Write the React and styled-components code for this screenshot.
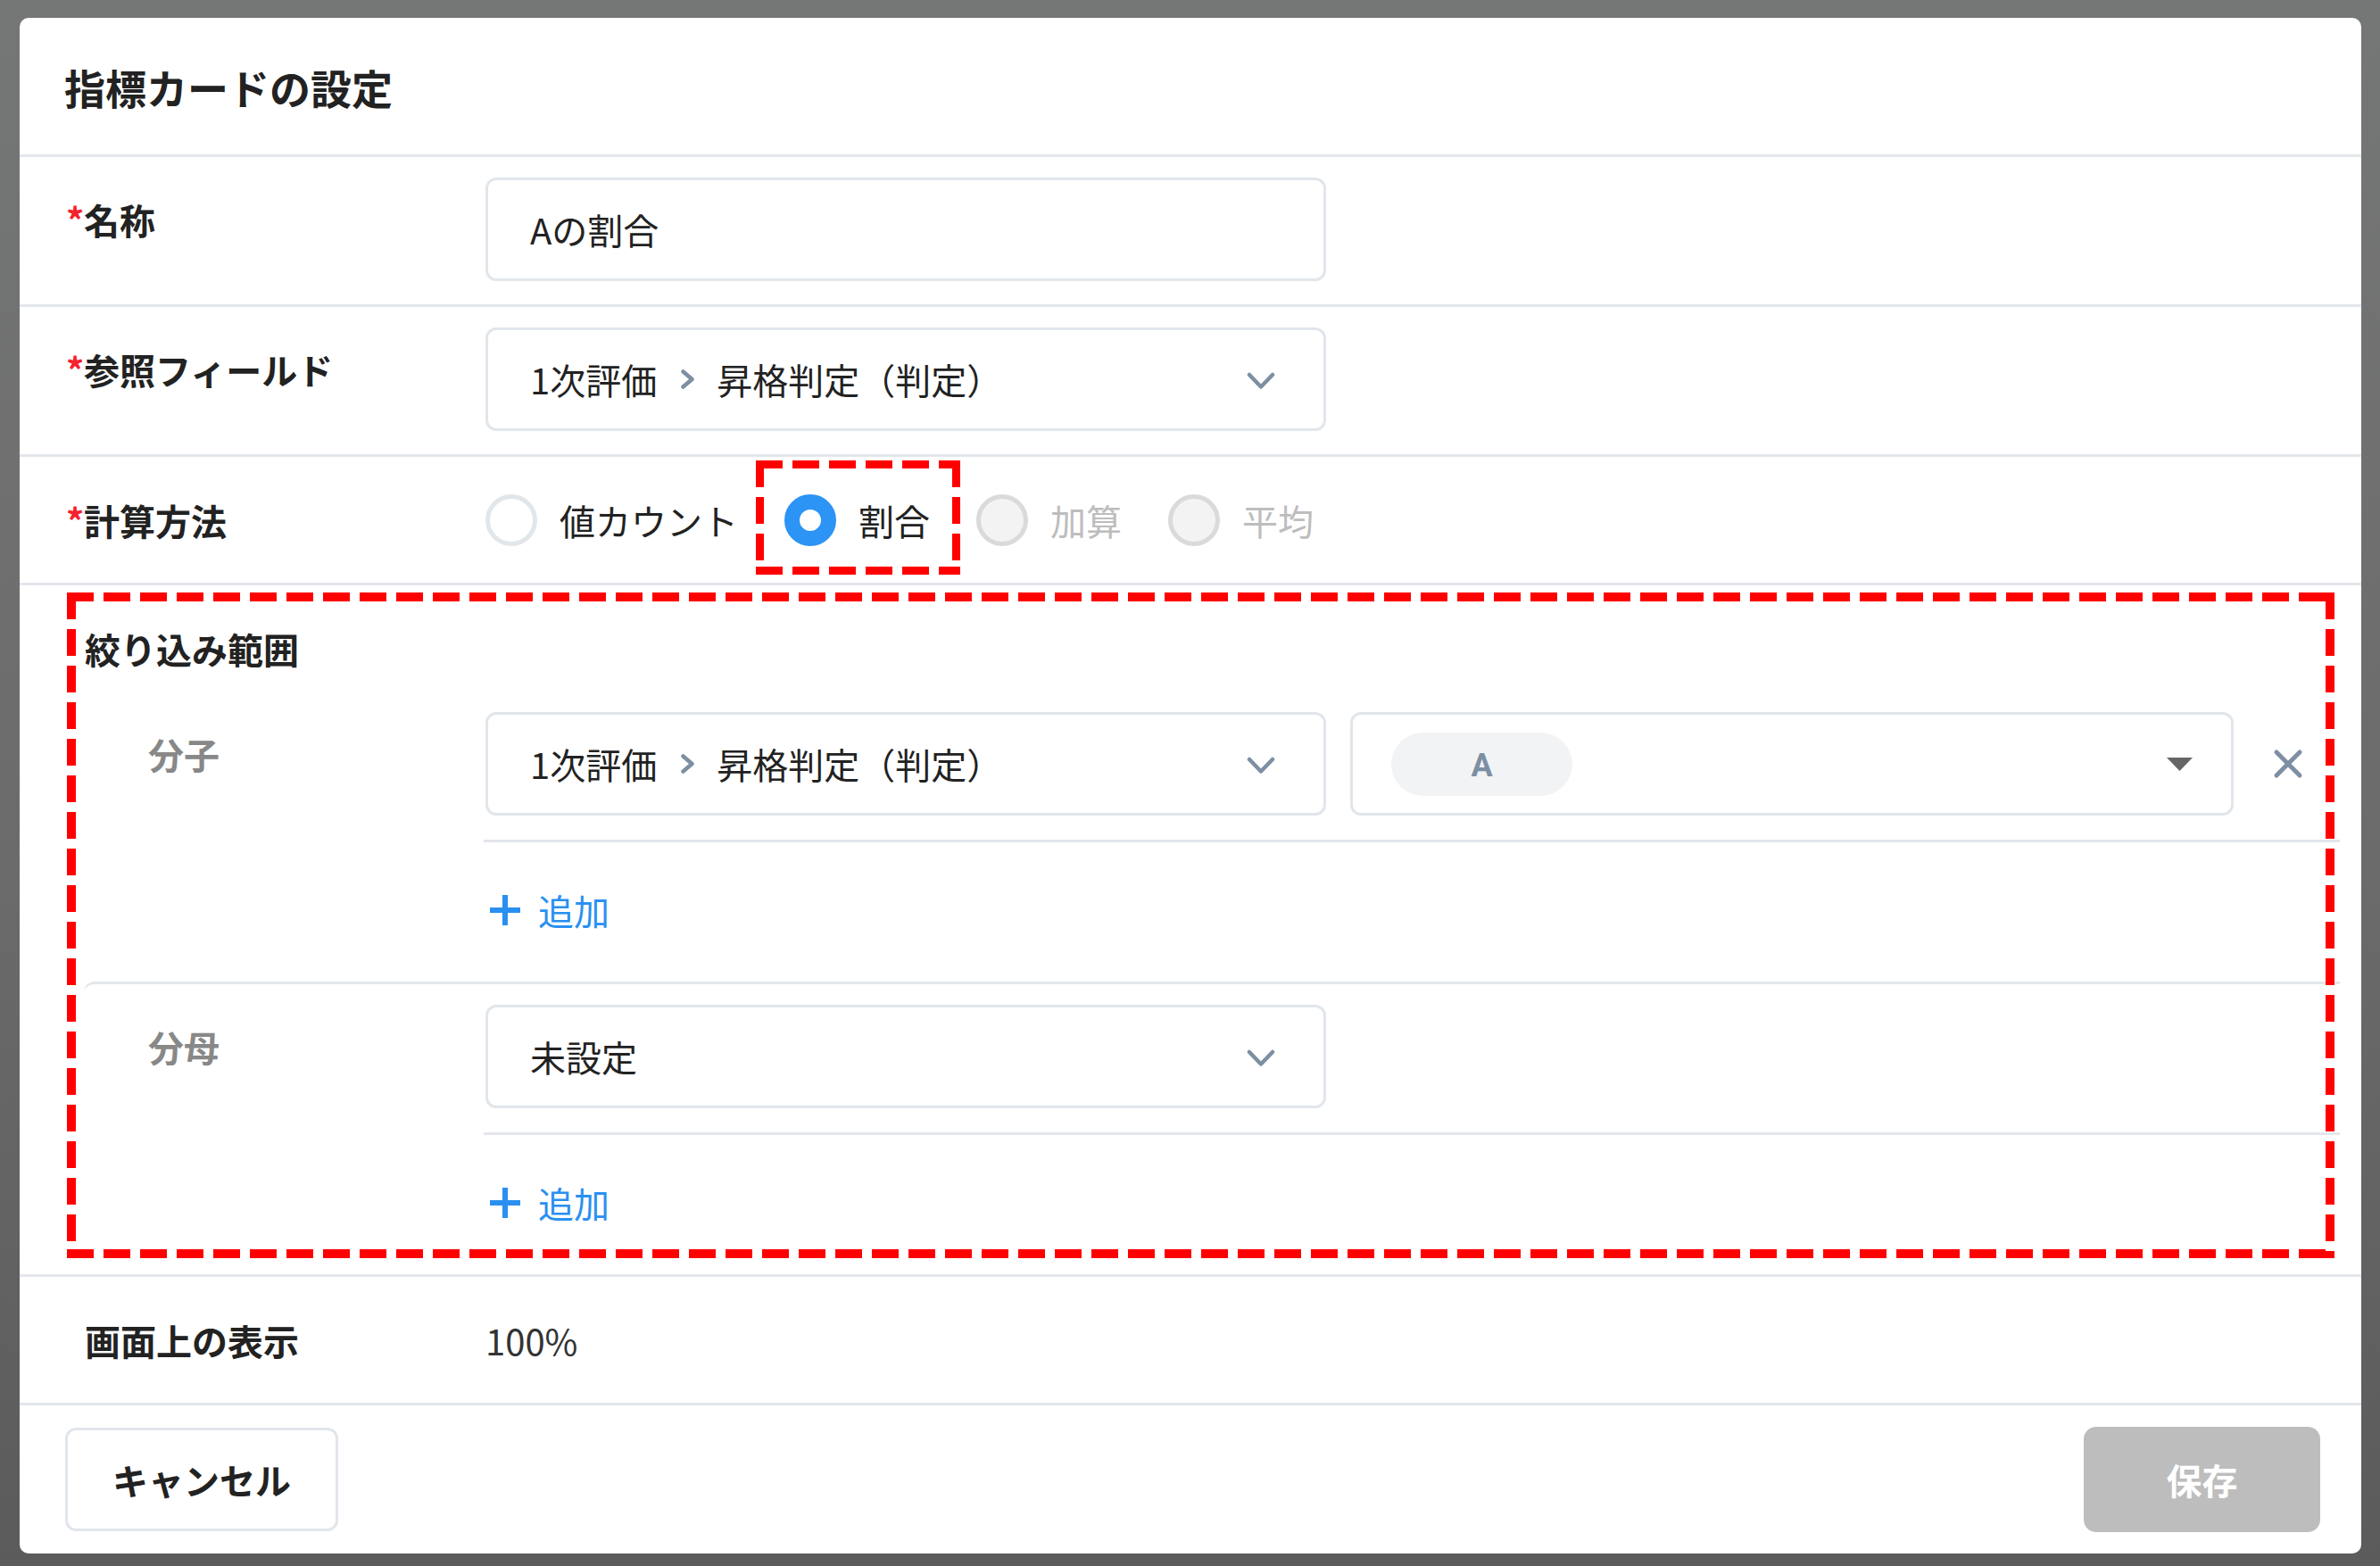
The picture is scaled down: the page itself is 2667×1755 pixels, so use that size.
import React from "react";
import styled, { createGlobalStyle, css } from "styled-components";

const GlobalStyle = createGlobalStyle`
  html, body { margin: 0; padding: 0; }
  body {
    font-family: "Noto Sans CJK JP", "Noto Sans", sans-serif;
    color: #222;
    background: #666;
  }
  * { box-sizing: border-box; }
`;

const LINE = "#e3e7ec";
const MUTED_ICON = "#7d8fa3";
const BLUE = "#2b94f5";

const dashed = (t) => css`
  background:
    repeating-linear-gradient(90deg, #ff0000 0 30px, transparent 30px 41px) left top / 100% ${t}px no-repeat,
    repeating-linear-gradient(90deg, #ff0000 0 30px, transparent 30px 41px) left bottom / 100% ${t}px no-repeat,
    repeating-linear-gradient(180deg, #ff0000 0 30px, transparent 30px 41px) left top / ${t}px 100% no-repeat,
    repeating-linear-gradient(180deg, #ff0000 0 30px, transparent 30px 41px) right top / ${t}px 100% no-repeat;
`;

const Backdrop = styled.div`
  min-height: 100vh;
  padding: 20px 0 0 22px;
  background: linear-gradient(180deg, #757676 0%, #6b6b6b 55%, #5b5b5b 100%);
`;

const Modal = styled.div`
  width: 2624px;
  height: 1721px;
  background: #fff;
  border-radius: 10px;
  display: flex;
  flex-direction: column;
  overflow: hidden;
`;

const Header = styled.div`
  height: 156px;
  flex: none;
  border-bottom: 3px solid ${LINE};
  padding-left: 50px;
  display: flex;
  align-items: center;
  font-size: 46px;
  font-weight: 700;
  color: #222;
`;

const Row = styled.div`
  display: grid;
  grid-template-columns: 522px 1fr;
  align-items: ${(p) => (p.$center ? "center" : "start")};
  padding: ${(p) => (p.$center ? "0" : "23px 0 26px")};
  height: ${(p) => (p.$center ? "144px" : "auto")};
  border-bottom: 3px solid ${LINE};
  flex: none;
`;

const Label = styled.div`
  padding-left: 73px;
  padding-top: ${(p) => (p.$center ? 0 : 17)}px;
  font-size: 40px;
  font-weight: 700;
  line-height: 60px;
  color: #222;
  white-space: nowrap;
`;

const Req = styled.span`
  display: inline-block;
  width: 20px;
  margin-left: -21px;
  color: #f5222d;
`;

const Field = styled.div`
  width: ${(p) => p.$w || 942}px;
  height: 116px;
  border: 3px solid #e1e6eb;
  border-radius: 12px;
  background: #fff;
  display: flex;
  align-items: center;
  justify-content: space-between;
  padding: ${(p) => (p.$tag ? "0 43px 0 43px" : "0 54px 0 47px")};
  font-size: 40px;
  line-height: 60px;
  color: #222;
  flex: none;
`;

const Crumb = styled.span`
  display: flex;
  align-items: center;
  white-space: nowrap;
`;

const CrumbSep = styled.svg`
  margin: 0 24px 0 26px;
  flex: none;
`;

const ChevronSvg = styled.svg`
  margin-top: 4px;
  flex: none;
`;

const Chevron = () => (
  <ChevronSvg width="32" height="20" viewBox="0 0 32 20" fill="none">
    <path d="M3 3 L16 16.5 L29 3" stroke={MUTED_ICON} strokeWidth="4.5" strokeLinecap="round" strokeLinejoin="round" />
  </ChevronSvg>
);

const Breadcrumb = ({ from, to }) => (
  <Crumb>
    {from}
    <CrumbSep width="17" height="22" viewBox="0 0 17 22" fill="none">
      <path d="M3.5 2.5 L13.5 11 L3.5 19.5" stroke={MUTED_ICON} strokeWidth="4.5" strokeLinecap="round" strokeLinejoin="round" />
    </CrumbSep>
    {to}
  </Crumb>
);

const RadioGroup = styled.div`
  display: flex;
  align-items: center;
  gap: 52px;
`;

const RadioItem = styled.div`
  position: relative;
  display: flex;
  align-items: center;
  gap: 25px;
  height: 58px;
  font-size: 40px;
  line-height: 60px;
  color: ${(p) => (p.$disabled ? "#bdbdbd" : "#222")};
`;

const RadioCircle = styled.span`
  width: 58px;
  height: 58px;
  border-radius: 50%;
  flex: none;
  ${(p) =>
    p.$checked
      ? css`
          border: 17px solid ${BLUE};
          background: #fff;
        `
      : p.$disabled
      ? css`
          border: 5px solid #dadada;
          background: #f3f3f3;
        `
      : css`
          border: 5px solid #e1e6eb;
          background: #fff;
        `}
`;

const Annotation = styled.div`
  position: absolute;
  pointer-events: none;
  top: ${(p) => p.$top}px;
  left: ${(p) => p.$left}px;
  right: ${(p) => p.$right}px;
  bottom: ${(p) => p.$bottom}px;
  ${(p) => dashed(p.$t)}
`;

const FilterSection = styled.div`
  position: relative;
  padding-top: 41px;
  border-bottom: 3px solid ${LINE};
  flex: none;
`;

const FilterTitle = styled.div`
  padding-left: 73px;
  margin-bottom: 18px;
  font-size: 40px;
  font-weight: 700;
  line-height: 60px;
  color: #222;
`;

const Block = styled.div`
  margin: 0 24px 0 72px;
  display: grid;
  grid-template-columns: 450px 1fr;
  padding: 23px 0 50px;
  border-top: ${(p) => (p.$divided ? `3px solid ${LINE}` : "none")};
  border-top-left-radius: ${(p) => (p.$divided ? "12px" : "0")};
`;

const BlockLabel = styled.div`
  padding-left: 72px;
  padding-top: 17px;
  font-size: 40px;
  font-weight: 700;
  line-height: 60px;
  color: #888;
`;

const Controls = styled.div`
  display: flex;
  flex-direction: column;
`;

const ControlRow = styled.div`
  display: flex;
  align-items: center;
  gap: 27px;
`;

const RemoveCell = styled.div`
  flex: 1;
  display: flex;
  align-items: center;
  padding-left: 17px;
`;

const Divider = styled.div`
  height: 3px;
  margin-top: 27px;
  margin-left: -2px;
  background: ${LINE};
`;

const AddButton = styled.button`
  margin-top: 46px;
  align-self: flex-start;
  display: flex;
  align-items: center;
  gap: 19px;
  padding: 0 0 0 4px;
  border: none;
  background: none;
  font-family: inherit;
  font-size: 40px;
  line-height: 60px;
  color: #2a90f0;
`;

const Tag = styled.span`
  width: 203px;
  height: 71px;
  border-radius: 36px;
  background: #f2f3f5;
  display: flex;
  align-items: center;
  justify-content: center;
  padding-top: 4px;
  font-family: Roboto, "Noto Sans", sans-serif;
  font-weight: 700;
  font-size: 36px;
  color: ${MUTED_ICON};
`;

const Value = styled.div`
  font-size: 40px;
  line-height: 60px;
  color: #333;
`;

const Footer = styled.div`
  flex: 1;
  display: flex;
  align-items: center;
  justify-content: space-between;
  padding: 0 46px 0 51px;
`;

const CancelButton = styled.button`
  height: 116px;
  padding: 0 50px;
  border: 3px solid #e1e6eb;
  border-radius: 12px;
  background: #fff;
  font-family: inherit;
  font-size: 40px;
  font-weight: 700;
  color: #222;
`;

const SaveButton = styled.button`
  width: 265px;
  height: 118px;
  border: none;
  border-radius: 14px;
  background: #bdbdbd;
  font-family: inherit;
  font-size: 40px;
  font-weight: 700;
  color: #fff;
`;

const PlusIcon = () => (
  <svg width="36" height="36" viewBox="0 0 36 36">
    <path d="M18 1 V35 M1 18 H35" stroke="#2a90f0" strokeWidth="6" />
  </svg>
);

const CaretIcon = () => (
  <svg width="29" height="15" viewBox="0 0 29 15">
    <polygon points="0,0 29,0 14.5,15" fill="#666" />
  </svg>
);

const CloseIcon = () => (
  <svg width="34" height="34" viewBox="0 0 34 34">
    <path d="M4 4 L30 30 M30 4 L4 30" stroke={MUTED_ICON} strokeWidth="5" strokeLinecap="round" />
  </svg>
);

export default function App() {
  return (
    <>
      <GlobalStyle />
      <Backdrop>
        <Modal>
          <Header>指標カードの設定</Header>

          <Row>
            <Label>
              <Req>*</Req>名称
            </Label>
            <Field>Aの割合</Field>
          </Row>

          <Row>
            <Label>
              <Req>*</Req>参照フィールド
            </Label>
            <Field>
              <Breadcrumb from="1次評価" to="昇格判定（判定）" />
              <Chevron />
            </Field>
          </Row>

          <Row $center>
            <Label $center>
              <Req>*</Req>計算方法
            </Label>
            <RadioGroup>
              <RadioItem>
                <RadioCircle />
                値カウント
              </RadioItem>
              <RadioItem>
                <RadioCircle $checked />
                割合
                <Annotation $t={9} $top={-38} $left={-32} $right={-34} $bottom={-32} />
              </RadioItem>
              <RadioItem $disabled>
                <RadioCircle $disabled />
                加算
              </RadioItem>
              <RadioItem $disabled>
                <RadioCircle $disabled />
                平均
              </RadioItem>
            </RadioGroup>
          </Row>

          <FilterSection>
            <FilterTitle>絞り込み範囲</FilterTitle>
            <Block>
              <BlockLabel>分子</BlockLabel>
              <Controls>
                <ControlRow>
                  <Field>
                    <Breadcrumb from="1次評価" to="昇格判定（判定）" />
                    <Chevron />
                  </Field>
                  <Field $w={990} $tag>
                    <Tag>A</Tag>
                    <CaretIcon />
                  </Field>
                  <RemoveCell>
                    <CloseIcon />
                  </RemoveCell>
                </ControlRow>
                <Divider />
                <AddButton>
                  <PlusIcon />
                  追加
                </AddButton>
              </Controls>
            </Block>
            <Block $divided>
              <BlockLabel>分母</BlockLabel>
              <Controls>
                <ControlRow>
                  <Field>
                    未設定
                    <Chevron />
                  </Field>
                </ControlRow>
                <Divider />
                <AddButton>
                  <PlusIcon />
                  追加
                </AddButton>
              </Controls>
            </Block>
            <Annotation $t={10} $top={8} $left={53} $right={30} $bottom={18} />
          </FilterSection>

          <Row $center>
            <Label $center>画面上の表示</Label>
            <Value>100%</Value>
          </Row>

          <Footer>
            <CancelButton>キャンセル</CancelButton>
            <SaveButton>保存</SaveButton>
          </Footer>
        </Modal>
      </Backdrop>
    </>
  );
}
